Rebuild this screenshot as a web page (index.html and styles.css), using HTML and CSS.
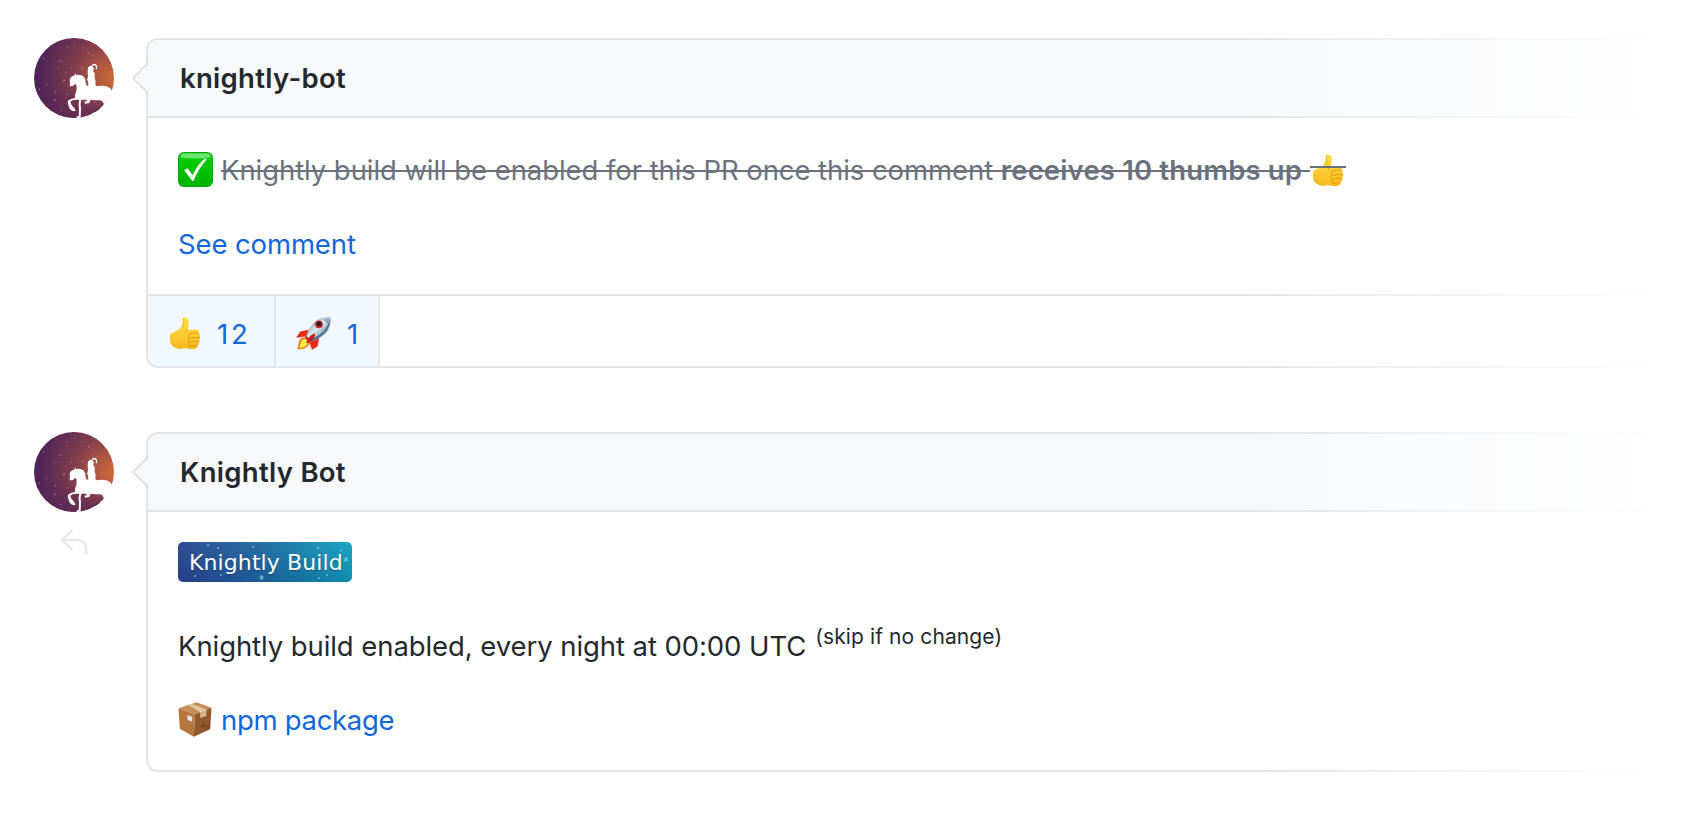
FILE: index.html
```
<!DOCTYPE html>
<html lang="en">
<head>
<meta charset="utf-8">
<title>Knightly Bot</title>
<link rel="stylesheet" href="styles.css">
</head>
<body>
<svg class="defs" width="0" height="0" aria-hidden="true">
  <defs>
    <radialGradient id="sky" gradientUnits="userSpaceOnUse" cx="278" cy="158" r="225">
      <stop offset="0" stop-color="#cc6935"/><stop offset=".25" stop-color="#ab5542"/><stop offset=".5" stop-color="#853e4c"/><stop offset=".78" stop-color="#653052"/><stop offset="1" stop-color="#4f2258"/>
    </radialGradient>
    <linearGradient id="dusk" gradientUnits="userSpaceOnUse" x1="0" y1="190" x2="0" y2="280"><stop offset="0" stop-color="#5a2855" stop-opacity="0"/><stop offset="1" stop-color="#5a2855" stop-opacity=".7"/></linearGradient>
    <clipPath id="disc"><circle cx="162" cy="159" r="121"/></clipPath>
    <linearGradient id="skin" x1="0" y1="0" x2="0" y2="1"><stop offset="0" stop-color="#ffdf45"/><stop offset="1" stop-color="#f8b91e"/></linearGradient>
    <linearGradient id="hull" x1="0" y1="0" x2="1" y2="1"><stop offset="0" stop-color="#5d89ad"/><stop offset=".45" stop-color="#dce8ef"/><stop offset="1" stop-color="#3d5f7d"/></linearGradient>
    <linearGradient id="green" x1="0" y1="0" x2="0" y2="1"><stop offset="0" stop-color="#2ed62e"/><stop offset=".25" stop-color="#00ca00"/><stop offset="1" stop-color="#00b400"/></linearGradient>
    <symbol id="avatar" viewBox="42 39 240 240">
      <circle cx="162" cy="159" r="120" fill="url(#sky)"/>
      <circle cx="162" cy="159" r="120" fill="url(#dusk)"/>
      <g fill="#d9a9b5" opacity=".65"><circle cx="163" cy="57" r="1.8"/><circle cx="141" cy="67" r="1.8"/><circle cx="189" cy="69" r="1.5"/><circle cx="206" cy="84" r="2"/><circle cx="71" cy="100" r="2"/><circle cx="123" cy="107" r="2"/><circle cx="115" cy="110" r="1.5"/><circle cx="103" cy="131" r="1.6"/><circle cx="114" cy="130" r="1.8"/><circle cx="154" cy="129" r="1.8"/><circle cx="186" cy="128" r="2.4"/><circle cx="137" cy="142" r="1.5"/><circle cx="132" cy="166" r="2.8"/><circle cx="79" cy="179" r="1.7"/><circle cx="58" cy="193" r="2.3"/><circle cx="106" cy="200" r="2"/><circle cx="104" cy="226" r="2.5"/><circle cx="124" cy="257" r="2"/><circle cx="142" cy="206" r="1.6"/><circle cx="217" cy="91" r="1.5"/><circle cx="244" cy="163" r="1.5"/></g>
      <g clip-path="url(#disc)">
        <path fill="#fff" d="M165 144L168 150Q182 147 190 154Q197 161 197 173L200 182L205 182L204 168L201 165L204 155L203 140L204 128Q208 121 217 123L222 131L219 139L224 144L224 158L227 169L226 180L230 184Q247 180 263 185Q273 189 276 197L290 190V236L252 258L238 262L218 275L232 260L245 248L250 236L247 228L238 226Q226 226 212 224L208 234L195 236L193 230L200 229V224Q184 224 168 224Q156 224 151 230Q153 240 161 247L167 256L163 259Q151 257 147 246Q142 235 144 227Q151 221 165 219Q164 208 169 198Q171 187 168 177Q161 178 158 184L152 184Q147 181 150 175L149 164Q152 154 164 151Z"/>
        <path fill="none" stroke="#fff" stroke-width="6" stroke-linejoin="round" d="M182 220q-5 15-2 29l-1 28M178 277h-8"/>
        <path fill="none" stroke="#fff" stroke-width="4" stroke-linecap="round" d="M217 122q6-6 11-1 3 4 1 10"/>
        <path fill="#5d2a50" d="M224 257l14-9 6 1-10 9-12 4zM245 237l6-3-1 6-4 3z"/>
      </g>
    </symbol>
    <symbol id="thumb" viewBox="88 91 98 102">
      <path fill="url(#skin)" d="M130 96q6-5 13 0 6 6 6 14-1 12-4 22l24-1q12 1 10 11 6 5 3 13 3 7-2 13 2 8-5 13 0 9-11 10-18 1-28-3-11 4-20 1-15-3-23-14-5-14-1-30 10-8 22-10 10-5 14-18 4-11 2-21z"/>
      <path fill="none" stroke="#d8930c" stroke-width="2.5" stroke-linecap="round" d="M179 143q-14-2-27 1M182 157q-14-3-29 1M180 169q-12-3-28 1M174 182q-10-2-22 0M145 132q-5 4-7 9M152 144q-7 3-3 12-5 5 0 13-4 5 3 13"/>
      <path fill="none" stroke="#f5b41e" stroke-width="3" d="M93 169q12 21 32 20M131 100q5 12 0 24"/>
    </symbol>
  </defs>
</svg>

<main class="timeline">
  <article class="item">
    <aside class="side"><svg class="avatar"><use href="#avatar"/></svg></aside>
    <section class="card">
      <svg class="caret" viewBox="0 0 16 32"><path d="M16 1L1 16l15 15" /></svg>
      <header class="head"><span class="t-user">knightly-bot</span></header>
      <div class="body">
        <p class="row">
          <svg class="check" viewBox="0 0 35 35"><rect width="35" height="35" rx="6" fill="#00a806"/><rect x="1" y="1.2" width="33" height="32.5" rx="5" fill="url(#green)"/><path d="M3 3.5q0-2 3-2h23q3 0 3 2v2q-14 2-29 0z" fill="#a4f0a4" opacity=".6"/><path d="M6.2 18.3l3.3-2.1 5.2 6.8Q19 13 26.8 6.4l2 1Q20.5 16 15.6 28.8q-.7.9-1.5 0z" fill="#fff"/></svg>
          <del class="struck"><span class="t-line">Knightly build will be enabled for this PR once this comment </span><strong class="t-bold">receives 10 thumbs up</strong><span> </span></del>
          <span class="thumb-struck"><svg class="thumb"><use href="#thumb"/></svg></span>
        </p>
        <p class="row"><a class="link t-see">See comment</a></p>
      </div>
      <footer class="reactions">
        <span class="reaction first"><svg class="thumb"><use href="#thumb"/></svg><span>12</span></span>
        <span class="reaction second"><svg class="rocket" viewBox="467 90 110 106">
          <path fill="#f02a12" stroke="#b91b0c" stroke-width="1" d="M505 132l-25 6-11 17 30-4zM537 156l-5 27-16 9-8-26 20-9z"/>
          <path fill="#f57d13" d="M495 156q-12-3-18 9l-6 26q19 2 30-7l10-12z"/><path fill="#ffee48" d="M496 160q-12 0-14 10l-5 17q15 0 23-9l7-9z"/>
          <path fill="url(#hull)" stroke="#456680" stroke-width="1" d="M572 94q-28-1-47 15-18 18-28 43l14 16q27-7 44-24 18-17 17-50z"/>
          <path fill="#4a6c88" d="M571 96q1 24-12 40-19 21-48 31l-4-5q25-7 43-24 17-20 21-42z"/>
          <path fill="#c81e1a" d="M497 149l-2 8 12 13 8-3zM522 143q-17 8-24 29l5 1q17-8 23-26z"/>
          <circle cx="537" cy="115" r="12" fill="#d42922"/><circle cx="538" cy="114" r="7.5" fill="#122536"/><path d="M550 101q12-5 18-4-1 11-5 18-4-9-13-14z" fill="#89a9bf"/>
        </svg><span>1</span></span>
      </footer>
    </section>
  </article>

  <article class="item">
    <aside class="side"><svg class="avatar"><use href="#avatar"/></svg>
      <svg class="reply" viewBox="0 0 28 26"><path d="M11.500 2L2 11l9.500 9M2 11h15q9 0 9 9v4"/></svg>
    </aside>
    <section class="card">
      <svg class="caret" viewBox="0 0 16 32"><path d="M16 1L1 16l15 15" /></svg>
      <header class="head"><span class="t-user">Knightly Bot</span></header>
      <div class="body body-build">
        <div class="badge">
          <svg class="stars" viewBox="0 0 174 40"><g fill="#8fd0e4" opacity=".7"><circle cx="30" cy="3" r="1"/><circle cx="40" cy="6" r="1"/><circle cx="75" cy="5" r="1"/><circle cx="140" cy="6" r="1"/><circle cx="163" cy="8.500" r="1"/><circle cx="17" cy="34" r="1"/><circle cx="43" cy="33" r="1"/><circle cx="149" cy="33" r="1"/><circle cx="141" cy="36" r="1"/></g><path stroke="#8fd0e4" stroke-width=".8" d="M168 15v5M165.800 16.200l4.400 2.600M165.800 18.800l4.400-2.600M83.500 33v5M81.300 34.200l4.400 2.600M81.300 36.800l4.400-2.600"/></svg>
          <span class="badge-text">Knightly Build</span>
        </div>
        <p class="row"><span class="t-enabled">Knightly build enabled, every night at 00:00 UTC</span><sup class="note">(skip if no change)</sup></p>
        <p class="row"><svg class="box" viewBox="41 276 101 105">
          <path fill="#c48e56" d="M96 277l45 16-50 20-49-18z"/><path fill="#b5763d" d="M42 295l49 18-3 67-42-24z"/><path fill="#93592c" d="M91 313l50-20-4 65-49 22z"/>
          <path fill="#e7cfb1" d="M72 286l10-4 43 17v18l-17 6v-16z"/><path fill="#d4b48c" d="M108 307l17-7v17l-17 6z"/><path fill="none" stroke="#c4a27e" stroke-width="2" d="M78 284l38 19"/><path fill="#dfe6ea" d="M69 315l14 5v15l-14-5z"/><path fill="none" stroke="#5d361b" stroke-width="2" d="M109 347l12-4-5 11zM126 345v11M134 341v12"/>
        </svg><a class="link t-npm">npm package</a></p>
      </div>
    </section>
  </article>
</main>
</body>
</html>
```
FILE: styles.css
```
* { box-sizing: border-box; }
body {
  margin: 0;
  background: #fff;
  color: #24292e;
  font-family: Inter, sans-serif;
  font-size: 27.5px;
  line-height: 42px;
  overflow: hidden;
}
p { margin: 0; }
.defs { position: absolute; }
.timeline {
  display: flex;
  flex-direction: column;
  gap: 64px;
  padding: 38px 0 0 34px;
}
.item { display: flex; gap: 32px; }
.side {
  display: flex;
  flex-direction: column;
  align-items: center;
  width: 80px;
  flex: none;
}
.avatar { width: 80px; height: 80px; display: block; }
.reply { width: 28px; height: 26px; margin-top: 17px; }
.reply path {
  fill: none;
  stroke: #e9e9ea;
  stroke-width: 2.7;
  stroke-linecap: round;
  stroke-linejoin: round;
}
.card {
  position: relative;
  width: 1540px;
  flex: none;
  border: 2px solid #e1e4e8;
  border-radius: 12px;
}
/* fades the right end of the card into the page */
.card::after {
  content: "";
  position: absolute;
  top: -2px;
  bottom: -2px;
  right: -2px;
  width: 440px;
  background: linear-gradient(90deg, rgba(255,255,255,0), rgba(255,255,255,.5) 180px, #fff 420px);
}
.caret {
  position: absolute;
  left: -16px;
  top: 22px;
  width: 16px;
  height: 32px;
}
.caret path { fill: #f6f8fa; stroke: #d5d9de; stroke-width: 1.4; }
.head {
  height: 78px;
  padding: 17px 32px;
  background: #f6f8fa;
  border-bottom: 2px solid #e1e4e8;
  border-radius: 10px 10px 0 0;
  font-weight: 600;
}
.body {
  position: relative;
  z-index: 1;
  display: flex;
  flex-direction: column;
  gap: 32px;
  padding: 31px 30px 29px;
}
.row { display: flex; height: 42px; white-space: pre; }
.check { width: 35px; height: 35px; margin: 3px 8px 0 0; }
.struck {
  color: #6a737d;
  text-decoration-thickness: 2px;
}
.t-user { letter-spacing: .3px; }
.t-line { letter-spacing: -.07px; }
.t-bold { font-weight: 600; letter-spacing: .16px; }
.t-see { letter-spacing: -.12px; }
.t-npm { letter-spacing: -.3px; }
.t-enabled { letter-spacing: -.08px; }
.thumb-struck { position: relative; padding: 4px 0 0 2px; width: 36px; }
.thumb-struck::after {
  content: "";
  position: absolute;
  left: 0;
  top: 17px;
  width: 36px;
  height: 2px;
  background: #6a737d;
}
.thumb { width: 32px; height: 34px; display: block; }
.link { color: #1467d8; }
.reactions {
  display: flex;
  height: 72px;
  border-top: 2px solid #e1e4e8;
}
.reaction {
  display: flex;
  padding-top: 17px;
  border-right: 2px solid #e1e4e8;
  background: #f1f8ff;
  color: #1467d8;
}
.reaction.first { width: 128px; padding-left: 21px; gap: 16px; border-bottom-left-radius: 10px; letter-spacing: 2.8px; }
.reaction.second { width: 104px; padding-left: 20px; gap: 15px; }
.reaction svg { margin-top: 3px; }
.rocket { width: 36px; height: 35px; }
.body-build { padding: 30px 30px 29px; }
.badge {
  position: relative;
  width: 174px;
  height: 40px;
  margin-bottom: 11px;
  padding-left: 11px;
  border-radius: 5px;
  background: linear-gradient(180deg, rgba(255,255,255,.04), rgba(0,30,80,.14)), linear-gradient(80deg, #2d4391, #1c6ca3 52%, #12a3bf);
  color: #fff;
  font: 22px/41px "DejaVu Sans", sans-serif;
  letter-spacing: .1px;
  white-space: nowrap;
}
.stars { position: absolute; left: 0; top: 0; width: 174px; height: 40px; }
.badge-text { text-shadow: 0 1px 1px rgba(0,0,0,.3); }
.note {
  margin-left: 9px;
  font-size: 21px;
  line-height: 24px;
  letter-spacing: .1px;
}
.box { width: 34px; height: 35px; margin: 3px 9px 0 0; }
```
